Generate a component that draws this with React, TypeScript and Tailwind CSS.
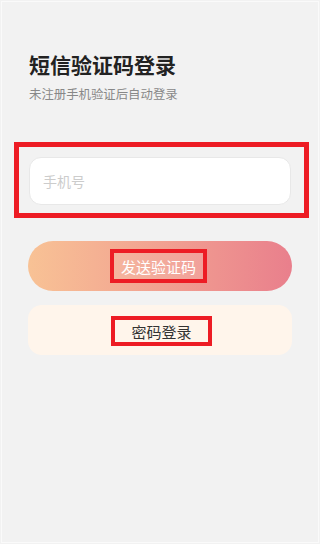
import React from "react";

const font = { fontFamily: '"Noto Sans CJK SC", "Noto Sans", sans-serif' };

export default function App() {
  return (
    <div className="w-[320px] h-[544px] bg-[#f2f2f2] p-px" style={font}>
      <div className="h-full border border-[#fafafa] flex flex-col">
        <div className="pl-[27px] pt-[48px]">
          <div className="text-[21px] leading-[28px] font-bold text-[#222222]">短信验证码登录</div>
          <div className="mt-2 text-[12.4px] leading-[16px] text-[#888888]">未注册手机验证后自动登录</div>
        </div>

        <div className="ml-[12px] mt-[40px] w-[295px] h-[76px] border-[5px] border-[#ed1c24] pl-[10px] pt-[10px]">
          <div className="w-[262px] h-[48px] bg-white rounded-[12px] border border-[#e8e8e8] flex items-center pl-[13px]">
            <span className="text-[14px] text-[#cccccc]">手机号</span>
          </div>
        </div>

        <div className="ml-[26px] mt-[23px] w-[264px] h-[50px] rounded-full bg-gradient-to-r from-[#f8c295] to-[#e97f8c] flex items-center justify-center">
          <div className="w-[97px] h-[34px] mr-[3px] border-[4px] border-[#ed1c24] bg-white/10 flex items-center justify-center">
            <span className="text-[15px] text-white leading-none">发送验证码</span>
          </div>
        </div>

        <div className="ml-[26px] mt-[14px] w-[264px] h-[50px] rounded-[14px] bg-[#fff5eb] flex items-center justify-center">
          <div className="w-[101px] h-[30px] ml-[3px] mt-[2px] border-[4px] border-[#ed1c24] flex items-center justify-center">
            <span className="text-[15px] text-[#333333] leading-none">密码登录</span>
          </div>
        </div>
      </div>
    </div>
  );
}
